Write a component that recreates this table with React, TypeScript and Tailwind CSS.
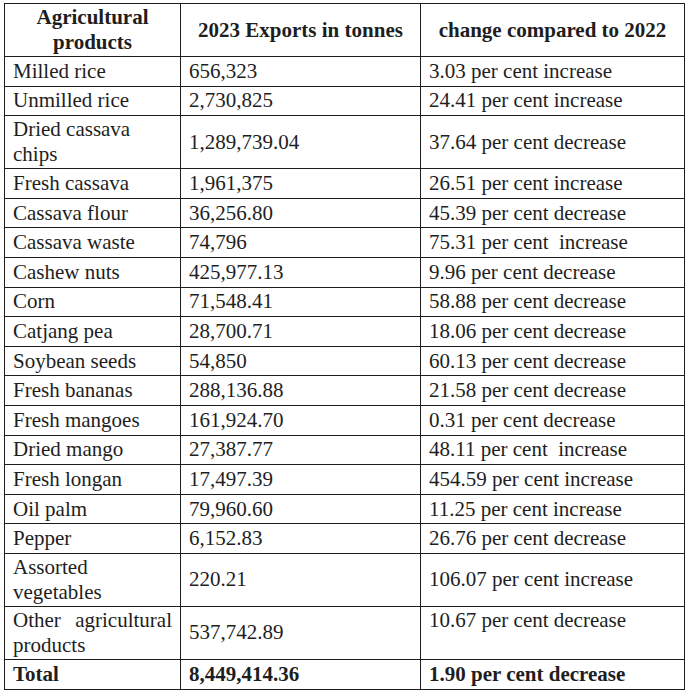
const rows: { name: string; amount: string; change: string; tall?: boolean }[] = [
  { name: "Milled rice", amount: "656,323", change: "3.03 per cent increase" },
  { name: "Unmilled rice", amount: "2,730,825", change: "24.41 per cent increase" },
  { name: "Dried cassava chips", amount: "1,289,739.04", change: "37.64 per cent decrease", tall: true },
  { name: "Fresh cassava", amount: "1,961,375", change: "26.51 per cent increase" },
  { name: "Cassava flour", amount: "36,256.80", change: "45.39 per cent decrease" },
  { name: "Cassava waste", amount: "74,796", change: "75.31 per cent \u00a0increase" },
  { name: "Cashew nuts", amount: "425,977.13", change: "9.96 per cent decrease" },
  { name: "Corn", amount: "71,548.41", change: "58.88 per cent decrease" },
  { name: "Catjang pea", amount: "28,700.71", change: "18.06 per cent decrease" },
  { name: "Soybean seeds", amount: "54,850", change: "60.13 per cent decrease" },
  { name: "Fresh bananas", amount: "288,136.88", change: "21.58 per cent decrease" },
  { name: "Fresh mangoes", amount: "161,924.70", change: "0.31 per cent decrease" },
  { name: "Dried mango", amount: "27,387.77", change: "48.11 per cent \u00a0increase" },
  { name: "Fresh longan", amount: "17,497.39", change: "454.59 per cent increase" },
  { name: "Oil palm", amount: "79,960.60", change: "11.25 per cent increase" },
  { name: "Pepper", amount: "6,152.83", change: "26.76 per cent decrease" },
  { name: "Assorted vegetables", amount: "220.21", change: "106.07 per cent increase", tall: true },
];

const cell = "border border-[#1c1c1c] px-2 py-0 align-middle";

export default function App() {
  return (
    <div className="bg-white w-[688px] h-[692px] pt-[3px] pl-[4px] text-[#1e1e1e] font-['Liberation_Serif',serif] text-[21px] leading-[25px]">
      <table className="border-collapse table-fixed w-[680px]">
        <colgroup>
          <col className="w-[176px]" />
          <col className="w-[240px]" />
          <col className="w-[264px]" />
        </colgroup>
        <thead>
          <tr className="h-[53px] font-bold text-center">
            <th className={cell}>Agricultural products</th>
            <th className={cell}>2023 Exports in tonnes</th>
            <th className={cell}>change compared to 2022</th>
          </tr>
        </thead>
        <tbody>
          {rows.map((r) => (
            <tr key={r.name} className={r.tall ? "h-[53px]" : "h-[29.6px]"}>
              <td className={cell}>{r.name}</td>
              <td className={cell}>{r.amount}</td>
              <td className={cell}>{r.change}</td>
            </tr>
          ))}
          <tr className="h-[53px]">
            <td className={`${cell} text-justify`}>Other agricultural products</td>
            <td className={cell}>537,742.89</td>
            <td className={`${cell} !align-top pt-[1px]`}>10.67 per cent decrease</td>
          </tr>
          <tr className="h-[29.6px] font-bold">
            <td className={cell}>Total</td>
            <td className={cell}>8,449,414.36</td>
            <td className={cell}>1.90 per cent decrease</td>
          </tr>
        </tbody>
      </table>
    </div>
  );
}
